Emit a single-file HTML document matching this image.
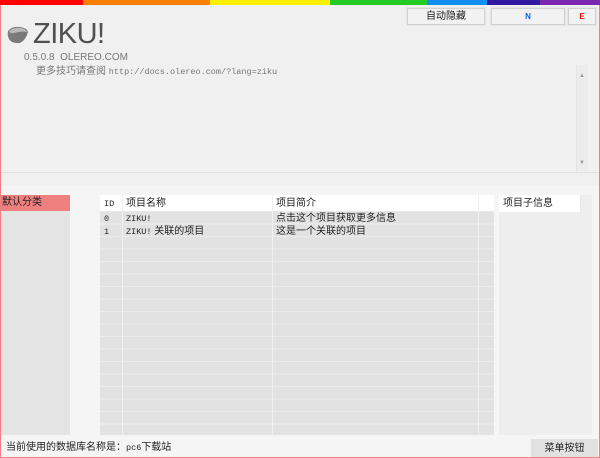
<!DOCTYPE html>
<html><head><meta charset="utf-8"><style>
*{margin:0;padding:0;box-sizing:border-box}
body{width:600px;height:458px;overflow:hidden;background:#f0f0f0;position:relative;font-family:"Liberation Sans","Noto Sans CJK SC",sans-serif;font-size:10px;color:#222}
.a{position:absolute;line-height:12px}
.bar div{position:absolute;top:0;height:5px}
.btn{background:#f2f2f2;border:1px solid #d0d0d0;box-shadow:0 0 0 1px #e6e6e6;text-align:center;line-height:15px!important;font-size:10px}
.cjk{font-family:"Liberation Sans","WenQuanYi Zen Hei",sans-serif;font-size:10px}
.mono{font-family:"Liberation Mono",monospace;font-size:8.5px}
</style></head><body>
<div class="bar">
<div style="left:0;width:83px;background:#ff0000"></div>
<div style="left:83px;width:127px;background:#ff7f00"></div>
<div style="left:210px;width:120px;background:#ffef00"></div>
<div style="left:330px;width:97px;background:#22cc22"></div>
<div style="left:427px;width:60px;background:#1090ee"></div>
<div style="left:487px;width:53px;background:#3018a0"></div>
<div style="left:540px;width:60px;background:#7a28b0"></div>
</div>
<div class="a" style="left:0;top:5px;width:1px;height:453px;background:#f08080"></div>
<div class="a" style="right:0;top:5px;width:1px;height:453px;background:#f08080"></div>
<div class="a btn cjk" style="left:407px;top:8px;width:78px;height:17px">自动隐藏</div>
<div class="a btn" style="left:491px;top:8px;width:74px;height:17px;color:#1060e0;font-weight:bold;font-size:8px">N</div>
<div class="a btn" style="left:568px;top:8px;width:28px;height:17px;color:#f00;font-weight:bold;font-size:8px">E</div>
<svg class="a" style="left:6px;top:25px" width="23" height="20"><path d="M2 6 Q6 1 14 2 Q21 3 22 7 Q20 15 14 18 Q6 19 3 14 Q1 10 2 6Z" fill="#7a7a7a"/><path d="M3 6 Q8 2 15 3 Q20 4 21 7 Q14 6 8 8 Q4 9 3 6Z" fill="#b8b8b8"/></svg>
<div class="a" style="left:33px;top:18px;font-size:29px;line-height:32px;color:#505050;letter-spacing:-0.5px">ZIKU!</div>
<div class="a" style="left:24px;top:52px;font-size:10px;color:#777">0.5.0.8&nbsp; OLEREO.COM</div>
<div class="a cjk" style="left:36px;top:66px;color:#777">更多技巧请查阅 <span class="mono">http://docs.olereo.com/?lang=ziku</span></div>
<div class="a" style="left:576px;top:65px;width:12px;height:106px;background:#ececec;border-left:1px solid #e4e4e4"></div>
<div class="a" style="left:579px;top:70px;font-size:6px;color:#999">▲</div>
<div class="a" style="left:579px;top:157px;font-size:6px;color:#999">▼</div>
<div class="a" style="left:1px;top:172px;width:598px;height:1px;background:#e2e2e2"></div>
<div class="a" style="left:1px;top:186px;width:598px;height:272px;background:#f5f5f5"></div>
<div class="a" style="left:1px;top:195px;width:69px;height:240px;background:#e4e4e4"></div>
<div class="a cjk" style="left:1px;top:195px;width:69px;height:16px;background:#f08080;line-height:16px;padding-left:1px">默认分类</div>
<div class="a" style="left:100px;top:212px;width:394px;height:223px;background:#e2e2e2 repeating-linear-gradient(#e2e2e2 0,#e2e2e2 11.5px,#ececec 11.5px,#ececec 12.5px)"></div>
<div class="a" style="left:100px;top:195px;width:394px;height:17px;background:#fff;border-bottom:1px solid #e8e8e8"></div>
<div class="a" style="left:122px;top:195px;width:1px;height:240px;background:#f0f0f0"></div>
<div class="a" style="left:272px;top:195px;width:1px;height:240px;background:#f0f0f0"></div>
<div class="a" style="left:478px;top:195px;width:1px;height:240px;background:#f0f0f0"></div>
<div class="a mono" style="left:104px;top:198px">ID</div>
<div class="a cjk" style="left:126px;top:198px">项目名称</div>
<div class="a cjk" style="left:276px;top:198px">项目简介</div>
<div class="a mono" style="left:104px;top:213px">0</div>
<div class="a mono" style="left:126px;top:213px">ZIKU!</div>
<div class="a cjk" style="left:276px;top:213px">点击这个项目获取更多信息</div>
<div class="a mono" style="left:104px;top:226px">1</div>
<div class="a cjk" style="left:126px;top:226px"><span class="mono">ZIKU!</span> 关联的项目</div>
<div class="a cjk" style="left:276px;top:226px">这是一个关联的项目</div>
<div class="a" style="left:499px;top:195px;width:93px;height:240px;background:#eeeeee"></div>
<div class="a cjk" style="left:499px;top:195px;width:82px;height:17px;background:#fff;padding-left:4px;line-height:17px;border-right:1px solid #e8e8e8">项目子信息</div>
<div class="a cjk" style="left:6px;top:442px">当前使用的数据库名称是：<span class="mono">pc6</span>下载站</div>
<div class="a cjk" style="left:531px;top:439px;width:67px;height:19px;background:#e1e1e1;text-align:center;line-height:19px">菜单按钮</div>
<div class="a" style="left:0;top:457px;width:600px;height:1px;background:#f08080"></div>
</body></html>
